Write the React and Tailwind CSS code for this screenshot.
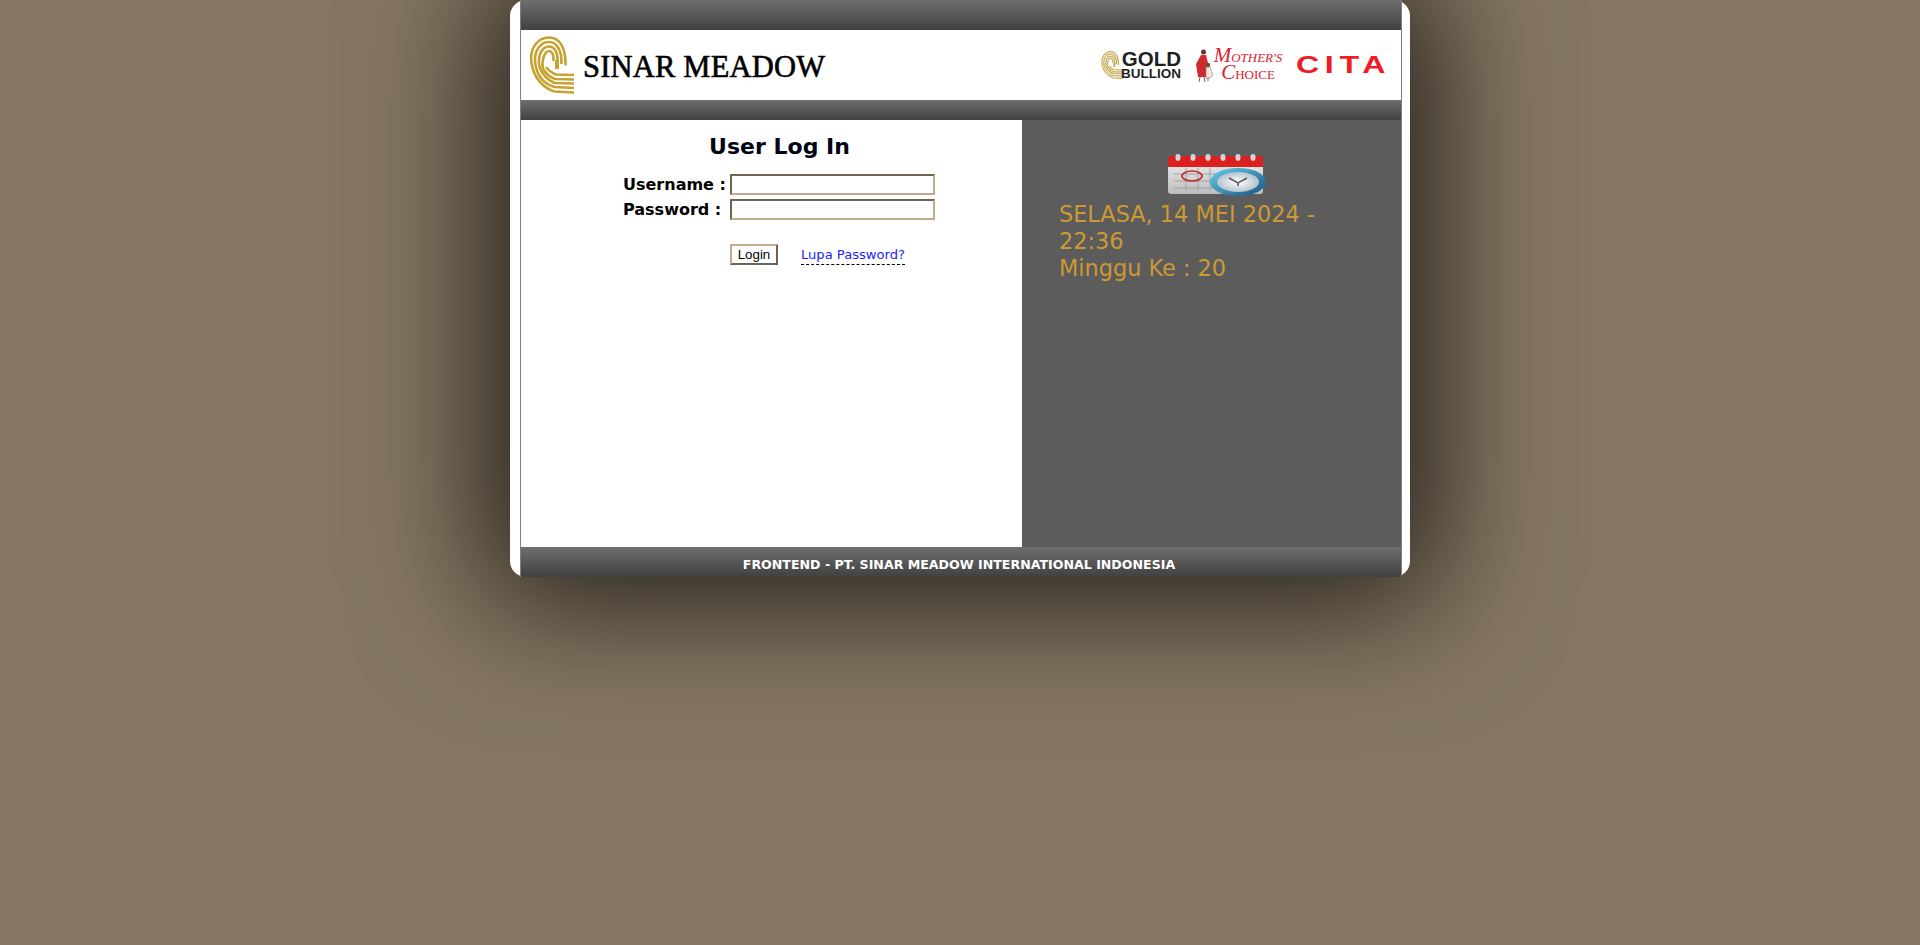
import React from "react";

const verdana = "[font-family:Verdana,'DejaVu_Sans',sans-serif]";

const BrandMark = ({ className, color = "#c5a32e" }) => (
  <svg viewBox="0 0 44 58" className={className} fill="none" stroke={color}>
    <path d="M1.5 27C-1 11 9 1.5 19 1.5c11 0 17 11 16.500 28" strokeWidth="2.6" />
    <path d="M5.500 29C3 14 11 6 19 6c8 0 13 9 12.500 22" strokeWidth="2.6" />
    <path d="M9.500 31C7 18 13 10.500 19 10.500c6 0 9 7 8.500 16" strokeWidth="2.6" />
    <path d="M13 33c-2-9 2-18 6-18 3 0 5 4 4.500 10" strokeWidth="2.6" />
    <path d="M1.500 27c2 14 11 25 23 28.500L44 56.500" strokeWidth="2.6" />
    <path d="M5.500 29c2 11 9 19 19 22L44 52" strokeWidth="2.6" />
    <path d="M9.500 31c3 8 8 13 15 16L44 47.500" strokeWidth="2.6" />
    <path d="M13 33c3 5 7 8 12 10l19 .5" strokeWidth="2.6" />
    <path d="M16 31c3 4 6 6 10 7.500L44 39" strokeWidth="2.6" />
    <path d="M25 24h4v9h-4z" fill={color} stroke="none" />
  </svg>
);

const MotherFigure = () => (
  <svg viewBox="0 0 17 33" className="h-[33px] w-[17px]">
    <circle cx="7.500" cy="3" r="2.500" fill="#5b3a2b" />
    <path d="M5 6h5l2 8-1 14H2L0 15z" fill="#cf2a2e" />
    <circle cx="12" cy="16" r="2.200" fill="#6b4a3a" />
    <path d="M10 18h4l3 8-3 3h-4z" fill="#f1e4dc" stroke="#a56f62" strokeWidth=".6" />
    <path d="M4 28l-1 5M8 28l1 5M12 29v3" stroke="#7a5a50" strokeWidth="1" />
  </svg>
);

const CalendarClock = () => (
  <svg viewBox="0 0 100 44" className="h-[44px] w-[100px]">
    <defs>
      <linearGradient id="paper" x1="0" y1="0" x2="0" y2="1">
        <stop offset="0" stopColor="#e9e9e9" />
        <stop offset="1" stopColor="#bdbdbd" />
      </linearGradient>
      <linearGradient id="ring" x1="0" y1="0" x2="1" y2="1">
        <stop offset="0" stopColor="#63d0ea" />
        <stop offset="1" stopColor="#1d4f80" />
      </linearGradient>
      <radialGradient id="face">
        <stop offset="0" stopColor="#ffffff" />
        <stop offset="1" stopColor="#b4c3cb" />
      </radialGradient>
    </defs>
    <rect x="1" y="8" width="95" height="33" rx="3" fill="url(#paper)" />
    <path d="M1 14V6a3 3 0 0 1 3-3h89a3 3 0 0 1 3 3v8z" fill="#dc1f1f" />
    {[11, 26, 41, 56, 71, 86].map((x) => (
      <rect key={x} x={x - 2.500} y="1" width="5" height="7" rx="2.400" fill="#d4d4d4" />
    ))}
    <path
      d="M7 21h80M7 28h50M7 35h50M19 15v23M31 15v23M43 15v23"
      stroke="#a3a3a3"
      strokeWidth="1"
    />
    <ellipse cx="25" cy="23" rx="10" ry="5" fill="none" stroke="#bf2a2a" strokeWidth="1.600" />
    <ellipse cx="71" cy="29" rx="28" ry="14" fill="url(#ring)" />
    <ellipse cx="71" cy="29" rx="21" ry="10" fill="url(#face)" />
    <path d="M62 25l9 5 9-5M71 30v3" fill="none" stroke="#555" strokeWidth="1.500" />
  </svg>
);

const BarGradient = ({ className, children }) => (
  <div className={`bg-gradient-to-b from-[#6f6f6f] to-[#414141] ${className}`}>{children}</div>
);

const Header = () => (
  <div className="flex h-[70px] shrink-0 items-center justify-between bg-white pl-[9px] pr-[13px]">
    <div className="flex items-center">
      <BrandMark className="h-[58px] w-[44px]" />
      <span className="ml-[9px] mt-[4px] whitespace-nowrap [font-family:'Liberation_Serif',serif] text-[30.5px] font-normal leading-none tracking-[0.2px] text-black [-webkit-text-stroke:0.6px_black]">
        SINAR MEADOW
      </span>
    </div>
    <div className="flex items-center">
      <div className="flex items-center">
        <BrandMark className="h-[28px] w-[22px]" color="#c9ad5a" />
        <div className="flex w-[58px] flex-col items-end [font-family:'Liberation_Sans',sans-serif] font-bold leading-none text-[#1f1f1f]">
          <span className="text-[20.5px] leading-[18px]">GOLD</span>
          <span className="text-[13.5px] leading-[12px]">BULLION</span>
        </div>
      </div>
      <div className="ml-[15px] flex items-center">
        <MotherFigure />
        <div className="flex w-[70px] flex-col items-center [font-family:'Liberation_Serif',serif] leading-none text-[#d8232f]">
          <span className="whitespace-nowrap text-[13px] italic leading-[15px]">
            <span className="text-[21px]">M</span>OTHER'S
          </span>
          <span className="whitespace-nowrap text-[13px] leading-[15px]">
            <span className="text-[21px] italic">C</span>HOICE
          </span>
        </div>
      </div>
      <div className="ml-[13px] w-[92px]">
        <span className="block origin-left [transform:scaleX(1.4)] [font-family:'Liberation_Sans',sans-serif] text-[23px] font-bold leading-none tracking-[4px] text-[#ee1c25]">
          CITA
        </span>
      </div>
    </div>
  </div>
);

const Field = ({ label, type }) => (
  <div className="flex h-[25px] items-center">
    <label className="w-[107px] whitespace-nowrap text-[16px] font-bold leading-none text-black">
      {label}
    </label>
    <input
      type={type}
      className="h-[21px] w-[205px] border-2 border-t-[#6f6351] border-l-[#6f6351] border-r-[#c4a98a] border-b-[#c4a98a] bg-white outline-none"
    />
  </div>
);

const LoginPanel = () => (
  <div className={`w-[501px] bg-white pt-[13px] ${verdana}`}>
    <h1 className="pl-[16px] text-center text-[22px] font-bold leading-[28px] text-[#000514]">
      User Log In
    </h1>
    <div className="mt-[11px] pl-[102px]">
      <Field label="Username :" type="text" />
      <Field label="Password :" type="password" />
      <div className="mt-[22px] flex items-center pl-[107px]">
        <button
          type="button"
          className="h-[21px] w-[48px] border-2 border-t-[#c4a98a] border-l-[#c4a98a] border-r-[#6f6351] border-b-[#6f6351] bg-white [font-family:'Liberation_Sans',sans-serif] text-[13.3px] leading-none text-black"
        >
          Login
        </button>
        <a
          href="#"
          className="ml-[23px] mt-[1px] border-b border-dashed border-black text-[13.1px] leading-[18px] text-[#2222ff]"
        >
          Lupa Password?
        </a>
      </div>
    </div>
  </div>
);

const DatePanel = () => (
  <div className={`flex-1 bg-[#5c5c5c] pl-[37px] pt-[33px] ${verdana}`}>
    <div className="ml-[108px]">
      <CalendarClock />
    </div>
    <p className="mt-[4px] w-[290px] text-[22.4px] leading-[27px] text-[#cc9933]">
      SELASA, 14 MEI 2024 - 22:36
      <br />
      Minggu Ke : 20
    </p>
  </div>
);

export default function App() {
  return (
    <div className="min-h-[945px] overflow-hidden bg-[#857762]">
      <div className="mx-auto h-[577px] w-[900px] rounded-[16px] bg-white pl-[10px] pr-[8px] shadow-[0_0_130px_25px_rgba(0,0,0,0.75)]">
        <div className="flex h-full flex-col border-x border-[#7f7f7f]">
          <BarGradient className="h-[30px] shrink-0" />
          <Header />
          <BarGradient className="h-[20px] shrink-0" />
          <div className="flex flex-1">
            <LoginPanel />
            <DatePanel />
          </div>
          <BarGradient className="h-[30px] shrink-0">
            <p className={`pr-[4px] text-center text-[12.6px] font-bold leading-[35px] text-white ${verdana}`}>
              FRONTEND - PT. SINAR MEADOW INTERNATIONAL INDONESIA
            </p>
          </BarGradient>
        </div>
      </div>
    </div>
  );
}
